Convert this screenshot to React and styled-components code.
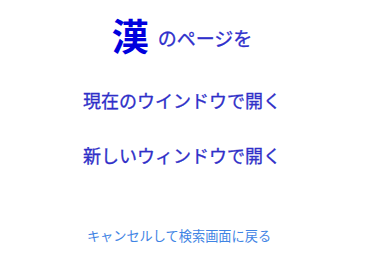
import React from 'react';
import styled, { createGlobalStyle } from 'styled-components';

// ─── Global ──────────────────────────────────────────────────────────────────

const GlobalStyle = createGlobalStyle`
  html, body {
    margin: 0;
    padding: 0;
    background: #ffffff;
  }
  body {
    font-family: 'Noto Sans CJK JP', 'Noto Sans', sans-serif;
  }
`;

// ─── Layout ──────────────────────────────────────────────────────────────────

const Page = styled.div`
  width: 370px;
  height: 266px;
  box-sizing: border-box;
  padding: 17px 6px 0 0;
  display: flex;
  flex-direction: column;
  align-items: center;
`;

const Header = styled.div`
  display: flex;
  align-items: center;
  gap: 9px;
  height: 36px;
`;

const Kanji = styled.span`
  font-size: 37px;
  line-height: 36px;
  font-weight: 700;
  color: #0000dd;
`;

const HeaderText = styled.span`
  font-size: 19px;
  line-height: 19px;
  color: #3030cc;
  margin-top: 4px;
  -webkit-text-stroke: 0.3px #3030cc;
`;

const Choice = styled.a`
  display: block;
  margin-top: ${({ $gap }) => $gap}px;
  font-size: 18px;
  line-height: 18px;
  color: #2f2fc8;
  -webkit-text-stroke: 0.3px #2f2fc8;
  text-decoration: none;
  cursor: pointer;
`;

const CancelLink = styled.a`
  display: block;
  margin-top: 65px;
  margin-right: 6px;
  font-size: 13.2px;
  line-height: 13px;
  color: #3f84e4;
  text-decoration: none;
  cursor: pointer;
`;

// ─── Component ───────────────────────────────────────────────────────────────

const App = () => (
  <>
    <GlobalStyle />
    <Page>
      <Header>
        <Kanji>漢</Kanji>
        <HeaderText>のページを</HeaderText>
      </Header>
      <Choice $gap={38}>現在のウインドウで開く</Choice>
      <Choice $gap={37}>新しいウィンドウで開く</Choice>
      <CancelLink>キャンセルして検索画面に戻る</CancelLink>
    </Page>
  </>
);

export default App;
